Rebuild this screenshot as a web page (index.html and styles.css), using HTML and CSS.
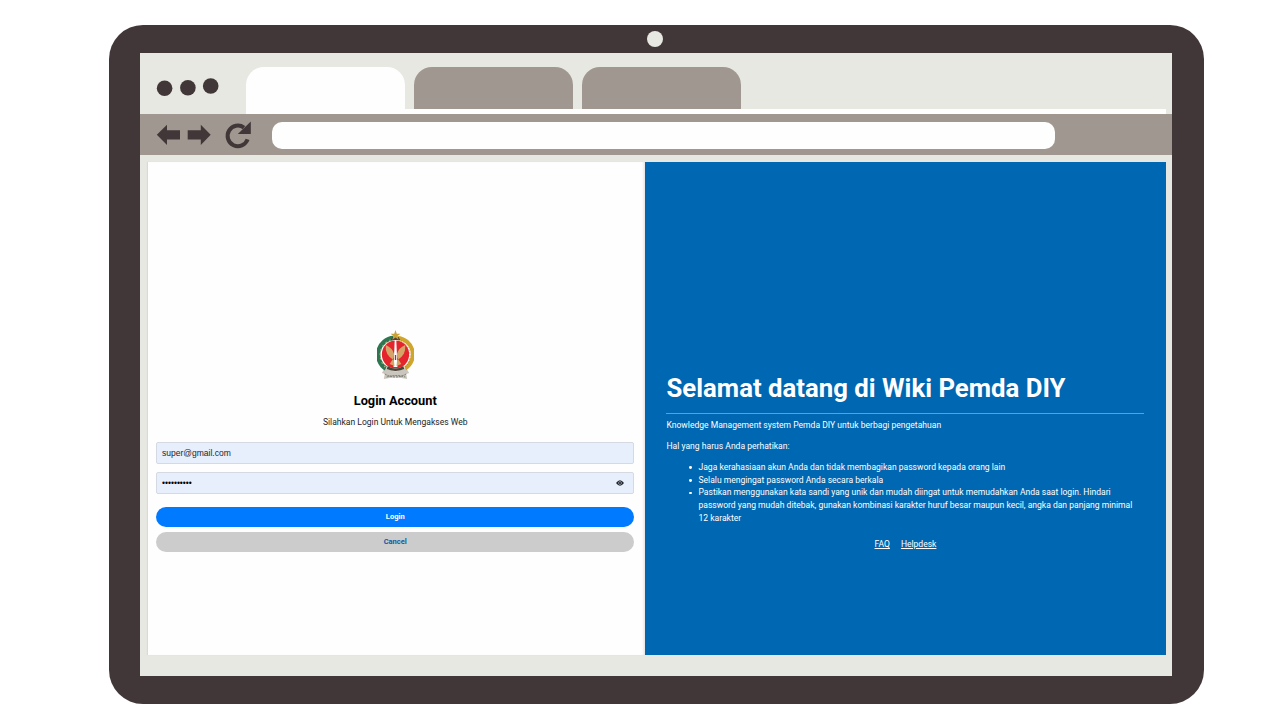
FILE: index.html
```
<!DOCTYPE html>
<html lang="id">
<head>
<meta charset="utf-8">
<title>Wiki Pemda DIY</title>
<link rel="stylesheet" href="styles.css">
</head>
<body>
<div class="device">
  <span class="camera"></span>
  <div class="screen">
    <header class="tabs">
      <svg class="dots" width="64" height="20" viewBox="0 0 64 20"><circle cx="8.6" cy="11.2" r="7.8"/><circle cx="31.9" cy="10.7" r="7.8"/><circle cx="54.7" cy="9" r="7.8"/></svg>
      <div class="tab active"></div>
      <div class="tab"></div>
      <div class="tab"></div>
      <div class="strip"></div>
    </header>
    <nav class="toolbar">
      <svg class="nav-icons" width="96" height="30" viewBox="0 0 96 30">
        <path d="M.8 14.8 11 4.7V10.2H24V19.4H11V24.9Z"/>
        <path d="M54.7 14.8 44.8 4.7V10.2H31.7V19.4H44.8V24.9Z"/>
        <path class="arc" d="M88 7.600A10.300 10.300 0 1 0 91.600 19.400"/>
        <path d="M94.800 1.500V14H81.800Z"/>
      </svg>
      <div class="address"></div>
    </nav>
    <main class="page">
      <section class="login">
        <svg class="crest" width="37" height="50" viewBox="1 0 38 50" preserveAspectRatio="none">
          <path fill="#c9c6bd" d="M9 38 6 43 9 44 8 49Q20 46 32 49L31 44 34 43 31 38Z"/>
          <path fill="none" stroke="#77756e" stroke-width="1" stroke-dasharray="2 1" d="M9 44Q20 50 31 44M11 47Q20 44 30 47"/>
          <circle cx="20" cy="25" r="16.200" fill="#fff"/>
          <path d="M18 8A16.500 16.500 0 0 0 10 38.500" fill="none" stroke="#2f7650" stroke-width="4.500"/>
          <path d="M15 10A16 16 0 0 0 9.500 37" fill="none" stroke="#a9b884" stroke-width="1.200" stroke-dasharray="1.500 3"/>
          <path d="M22 8A16.500 16.500 0 0 1 30 38.500" fill="none" stroke="#d0a52c" stroke-width="4.200"/>
          <path d="M23 10A16 16 0 0 1 30 37" fill="none" stroke="#8b6b16" stroke-width=".8" stroke-dasharray="1 2"/>
          <circle cx="20" cy="24.500" r="14" fill="#e4252c"/>
          <path fill="#fff" d="M19.200 10H20.800L22 37H18Z"/>
          <path fill="#d6a466" d="M18 30Q9 25 10 15Q17 18 18.500 24ZM22 30Q31 25 30 15Q23 18 21.500 24ZM18 28 14 34 19 36ZM22 28 26 34 21 36Z"/>
          <path fill="#a43325" d="M19.300 25H20.700V30H19.300Z"/>
          <path fill="#4a4435" d="M12 36Q20 41 28 36L29 39Q20 43 11 39ZM17 7 23 7 25 10H15Z"/>
          <path fill="#caa038" d="M20 0 21.300 3.700 25 3.800 22.100 6.100 23.200 9.700 20 7.500 16.800 9.700 17.900 6.100 15 3.800 18.700 3.700Z"/>
        </svg>
        <h2 class="title">Login Account</h2>
        <p class="subtitle">Silahkan Login Untuk Mengakses Web</p>
        <div class="field">super@gmail.com</div>
        <div class="field"><span class="mask">••••••••••</span>
          <svg class="eye" width="8" height="6" viewBox="0 0 8 6"><path fill="#20242b" d="M0 3Q4-2.400 8 3Q4 8.400 0 3Z"/><circle cx="4" cy="3" r="1.500" fill="none" stroke="#bfc5d1" stroke-width=".6"/></svg>
        </div>
        <div class="btn primary">Login</div>
        <div class="btn cancel">Cancel</div>
      </section>
      <section class="welcome">
        <h1 class="headline">Selamat datang di Wiki Pemda DIY</h1>
        <p class="text">Knowledge Management system Pemda DIY untuk berbagi pengetahuan</p>
        <p class="text">Hal yang harus Anda perhatikan:</p>
        <ul class="rules">
          <li>Jaga kerahasiaan akun Anda dan tidak membagikan password kepada orang lain</li>
          <li>Selalu mengingat password Anda secara berkala</li>
          <li>Pastikan menggunakan kata sandi yang unik dan mudah diingat untuk memudahkan Anda saat login. Hindari<br>password yang mudah ditebak, gunakan kombinasi karakter huruf besar maupun kecil, angka dan panjang minimal<br>12 karakter</li>
        </ul>
        <div class="links"><a>FAQ</a><a>Helpdesk</a></div>
      </section>
    </main>
  </div>
</div>
</body>
</html>
```
FILE: styles.css
```
* { box-sizing: border-box; }
body {
  margin: 0;
  height: 720px;
  overflow: hidden;
  background: #fff;
  font-family: Roboto, "Liberation Sans", sans-serif;
  padding: 24.6px 0 0 108.8px;
}
.device {
  position: relative;
  width: 1095.2px;
  height: 679.6px;
  padding: 28.6px 31.500px 28.200px;
  border-radius: 34px;
  background: #413738;
}
.camera {
  position: absolute;
  left: 537.9px;
  top: 6.500px;
  width: 16.400px;
  height: 16.400px;
  border-radius: 50%;
  background: #e6e8e1;
}
.screen {
  display: flex;
  flex-direction: column;
  height: 100%;
  background: #e6e8e1;
}
.tabs {
  display: flex;
  align-items: flex-start;
  height: 60.700px;
  padding: 13.800px 6.200px 0 15.700px;
  background: linear-gradient(#fefefe, #fefefe) 265px 56px / 761px 5px no-repeat;
}
.dots { margin: 9.600px 26.100px 0 0; fill: #413738; flex: none; }
.tab {
  width: 159px;
  height: 42px;
  margin-right: 9px;
  border-radius: 18px 18px 0 0;
  background: #a09790;
}
.tab.active { height: 47px; background: #fefefe; }
.toolbar {
  display: flex;
  height: 41.400px;
  padding: 7.700px 0 0 15.700px;
  background: #a09790;
}
.nav-icons { margin: -1.200px 20.400px 0 0; fill: #413738; flex: none; }
.nav-icons .arc { fill: none; stroke: #413738; stroke-width: 4; }
.address {
  width: 782.500px;
  height: 27px;
  border-radius: 10px;
  background: #fefefe;
}
.page {
  display: flex;
  width: 1018px;
  height: 493.200px;
  margin: 6.700px 0 0 7.700px;
}
.login {
  display: flex;
  flex-direction: column;
  align-items: center;
  width: 497px;
  padding: 168.500px 10.500px 0 8px;
  background: #fefefe;
  box-shadow: -1px 0 1px #d9dad5, inset -3px 0 3px -2px #ddd;
  color: #212529;
}
.crest { flex: none; }
.title { margin: 13px 0 0; font-size: 12.800px; line-height: 16px; font-weight: 700; color: #000; }
.subtitle { margin: 7px 0 12.800px; font-size: 8.560px; line-height: 13px; }
.field {
  display: flex;
  align-items: center;
  justify-content: space-between;
  width: 100%;
  height: 22px;
  margin-bottom: 7.500px;
  padding: 0 10px 0 5px;
  border: 1px solid #d5dae2;
  border-radius: 2px;
  background: #e8effc;
  font-family: "Liberation Sans", sans-serif;
  font-size: 8.530px;
}
.mask { font-size: 8.530px; color: #000; }
.eye { margin-right: -1px; }
.btn {
  width: 100%;
  height: 20px;
  border-radius: 10px;
  font-size: 7.500px;
  line-height: 20px;
  font-weight: 700;
  text-align: center;
}
.primary { margin-top: 5.500px; background: #007bff; color: #fff; }
.cancel { margin-top: 5px; background: #ccc; color: #0c5aa9; }
.welcome {
  width: 521px;
  padding: 208px 21.500px 0;
  background: #0067b2;
  color: #fff;
}
.headline {
  margin: 0 0 5.300px;
  padding-bottom: 6.800px;
  border-bottom: 1px solid #619fce;
  font-size: 25.750px;
  line-height: 36px;
  font-weight: 700;
  white-space: nowrap;
}
.text { margin: 0 0 8.200px; font-size: 8.570px; line-height: 12.800px; }
.rules { margin: -.3px 0 0; padding: 0 0 0 32px; font-size: 8.550px; line-height: 12.800px; white-space: nowrap; list-style: none; }
.rules li::before {
  content: "";
  float: left;
  width: 2.800px;
  height: 2.800px;
  margin: 5.300px 0 0 -9.300px;
  border-radius: 50%;
  background: #fff;
}
.links {
  display: flex;
  justify-content: center;
  gap: 11px;
  margin-top: 13.500px;
  font-size: 8.530px;
  line-height: 12.800px;
  text-decoration: underline;
}
```
